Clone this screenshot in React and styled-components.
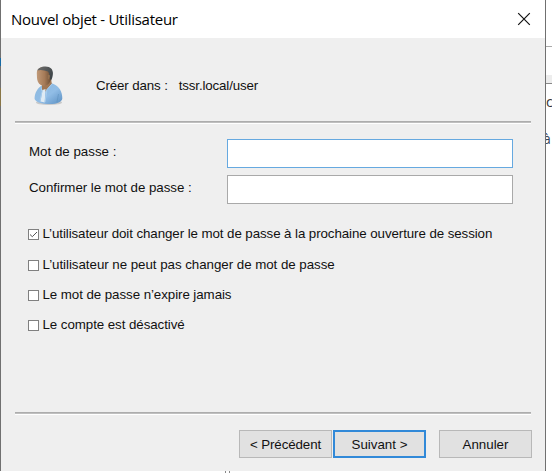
import React from "react";
import styled, { createGlobalStyle } from "styled-components";

const GlobalStyle = createGlobalStyle`
  * { box-sizing: border-box; }
  body { margin: 0; background: #fff; overflow: hidden; }
`;

const Desktop = styled.main`
  position: relative;
  width: 552px;
  height: 473px;
  overflow: hidden;
  background: #fff;
  color: #111;
  font: 13.33px/16px "Liberation Sans", Arial, sans-serif;
`;

const Dialog = styled.section`
  display: flex;
  flex-direction: column;
  width: 546px;
  height: 471px;
  border: solid #707070;
  border-width: 0 1px;
  background: #efefef;
`;

const TitleBar = styled.header`
  display: flex;
  align-items: center;
  justify-content: space-between;
  height: 38px;
  padding: 0 14px 0 10px;
  background: #fff;
`;

const Title = styled.h1`
  margin: 0;
  font: 400 15px/22px "Open Sans", "Noto Sans", sans-serif;
  letter-spacing: -0.27px;
  color: #000;
`;

const CloseButton = styled.button`
  display: flex;
  padding: 0;
  border: 0;
  background: none;
`;

const Context = styled.div`
  display: flex;
  align-items: center;
  height: 83px;
  padding: 11px 0 0 32px;
`;

const Label = styled.span`
  white-space: pre;
  letter-spacing: ${(p) => p.$spacing || 0}px;
`;

const ContextText = styled.div`
  display: flex;
  gap: 11px;
  margin: 2px 0 0 31px;
`;

const Divider = styled.div`
  flex: none;
  height: 3px;
  margin: 0 14px;
  border-top: 1px solid #adadad;
  border-bottom: 1px solid #fff;
  background: #bfbfbf;
`;

const Fields = styled.div`
  display: grid;
  grid-template-columns: 198px 286px;
  row-gap: 7px;
  padding: 15px 0 0 28px;
`;

const FieldLabel = styled.label`
  padding-top: 5px;
`;

const Field = styled.input`
  width: 286px;
  height: 29px;
  padding: 4px;
  border: 1px solid ${(p) => (p.$active ? "#66a9e0" : "#a9a9a9")};
  background: #fff;
  outline: none;
`;

const Options = styled.div`
  display: grid;
  grid-template-rows: 31px 30px 30px 30px;
  padding: 22px 0 0 27px;
`;

const Option = styled.label`
  display: flex;
  align-items: flex-start;
  gap: 3.5px;
`;

const Box = styled.span`
  display: flex;
  flex: none;
  width: 11px;
  height: 11px;
  margin-top: 3px;
  border: 1px solid #808080;
  background: #fff;
`;

const Actions = styled.footer`
  display: flex;
  height: 56px;
  padding: 15px 0 0 238px;
`;

const Bottom = styled.div`
  margin-top: auto;
`;

const Button = styled.button`
  width: 93px;
  height: 28px;
  margin-right: ${(p) => p.$gap || 0}px;
  padding: 2px 0 0;
  border: ${(p) => (p.$primary ? "2px solid #3189d8" : "1px solid #b8b8b8")};
  background: #e1e1e1;
  color: #111;
  font: inherit;
`;

const Backdrop = styled.div`
  position: absolute;
  left: 546px;
  top: 0;
  width: 6px;
  height: 473px;
  overflow: hidden;
`;

const BackdropBand = styled.div`
  height: 38px;
  margin-top: 46px;
  border-top: 1px solid #aaa;
  border-bottom: 1px solid #888;
  background: linear-gradient(#fff 28px, #ededed 28px);
`;

const BackdropText = styled.div`
  height: 37px;
  padding-top: 9px;
  margin-left: ${(p) => p.$shift}px;
  color: ${(p) => p.$color};
  font: 14px/18px "Open Sans", sans-serif;
`;

const BelowText = styled.div`
  position: absolute;
  left: 225px;
  top: 471px;
  display: flex;
  gap: 3px;
`;

const Speck = styled.i`
  width: 1px;
  height: 2px;
  background: #888;
`;

const EdgeTint = styled.i`
  position: absolute;
  left: 0;
  top: ${(p) => p.$top}px;
  width: 1px;
  height: ${(p) => p.$height}px;
  background: ${(p) => p.$color};
`;

function UserIcon() {
  return (
    <svg width="32" height="42" viewBox="0 0 32 42" aria-hidden="true">
      <defs>
        <linearGradient id="skin">
          <stop stopColor="#c19a78" />
          <stop offset=".5" stopColor="#a67b58" />
          <stop offset="1" stopColor="#60452f" />
        </linearGradient>
        <linearGradient id="shirt" x2="1" y2="1">
          <stop stopColor="#8db9de" />
          <stop offset=".55" stopColor="#91bde6" />
          <stop offset="1" stopColor="#5a8fc2" />
        </linearGradient>
        <linearGradient id="hair" x2="1" y2=".6">
          <stop stopColor="#71706e" />
          <stop offset="1" stopColor="#3d4448" />
        </linearGradient>
      </defs>
      <ellipse cx="16" cy="38.5" rx="13" ry="2.5" fill="#aaa" opacity=".55" />
      <path d="M9 21.5C4.5 23.5 1.5 29.5 1.6 35c1 3 7 5 15.4 5 7 0 12-2 12.3-5.5C29.5 27.5 26 22.5 20.5 20L18 19l-7 4z" fill="url(#shirt)" />
      <path d="M9 19l9-4 .8 4.5-5 6-2.8 3.5-2-4z" fill="#a07755" />
      <path d="M9.5 26l3-1-.8 13.5-4.2-1z" fill="#dfebf4" />
      <path d="M8 23.5l1 4-2 9M19 20l-5 5.5-2 12.5" fill="none" stroke="#a9cdec" strokeWidth="1" />
      <path d="M3.8 9C3.8 4 8 3 12 3c5 0 8 3 7 8-.5 5-3 11-8 10.8C7 21.6 4.4 19 4 14z" fill="url(#skin)" />
      <path d="M4.3 6.6C5 4 8 2.4 12.5 2.4c5 0 7.7 3 7.4 7.4-.2 3-.8 5-1.8 6.6l-1.9-3 .1-4-1.3-1.8C11 6 7 5.2 4.3 6.6z" fill="url(#hair)" />
      <path d="M14.8 11c1.8-1 2.5.2 2 2-.3 1.8-1 2.6-2 2.3z" fill="#94704f" />
      <path d="M25.5 30l-1.5 8" stroke="#5d90bc" opacity=".55" />
    </svg>
  );
}

const options = [
  { text: "L’utilisateur doit changer le mot de passe à la prochaine ouverture de session", spacing: -0.085, checked: true },
  { text: "L’utilisateur ne peut pas changer de mot de passe", spacing: -0.04 },
  { text: "Le mot de passe n’expire jamais", spacing: -0.07 },
  { text: "Le compte est désactivé", spacing: -0.07 },
];

export default function App() {
  return (
    <>
      <GlobalStyle />
      <Desktop>
        <Dialog>
          <TitleBar>
            <Title>Nouvel objet - Utilisateur</Title>
            <CloseButton aria-label="Fermer">
              <svg width="14" height="14" viewBox="0 0 14 14">
                <path d="M1.2 1.2l11.6 11.6M12.8 1.2L1.2 12.8" stroke="#111" strokeWidth="1.2" />
              </svg>
            </CloseButton>
          </TitleBar>
          <Context>
            <UserIcon />
            <ContextText>
              <Label $spacing={-0.13}>Créer dans :</Label>
              <Label $spacing={-0.15}>tssr.local/user</Label>
            </ContextText>
          </Context>
          <Divider />
          <Fields>
            <FieldLabel htmlFor="password"><Label>Mot de passe :</Label></FieldLabel>
            <Field id="password" type="password" $active />
            <FieldLabel htmlFor="confirmation"><Label $spacing={-0.04}>Confirmer le mot de passe :</Label></FieldLabel>
            <Field id="confirmation" type="password" />
          </Fields>
          <Options>
            {options.map(({ text, spacing, checked }) => (
              <Option key={text}>
                <Box>
                  {checked && (
                    <svg width="9" height="9" viewBox="0 0 9 9">
                      <path d="M1 4.5l2.3 2.2L8 2" fill="none" stroke="#555" />
                    </svg>
                  )}
                </Box>
                <Label $spacing={spacing}>{text}</Label>
              </Option>
            ))}
          </Options>
          <Bottom>
            <Divider />
            <Actions>
              <Button $gap={1}><Label $spacing={-0.1}>&lt; Précédent</Label></Button>
              <Button $primary $gap={13}>Suivant &gt;</Button>
              <Button>Annuler</Button>
            </Actions>
          </Bottom>
        </Dialog>
        <Backdrop>
          <BackdropBand />
          <BackdropText $shift={0} $color="#333">c</BackdropText>
          <BackdropText $shift={-3} $color="#36455b">à</BackdropText>
        </Backdrop>
        <BelowText><Speck /><Speck /></BelowText>
        <EdgeTint $top={58} $height={8} $color="#176aa4" />
        <EdgeTint $top={88} $height={18} $color="#897646" />
      </Desktop>
    </>
  );
}
